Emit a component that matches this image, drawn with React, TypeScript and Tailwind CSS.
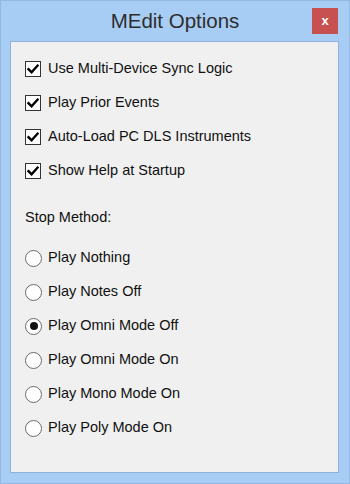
import React from "react";

const font = { fontFamily: '"Liberation Sans", Arial, sans-serif' };

function Check() {
  return (
    <div className="w-[16px] h-[16px] border border-[#333333] bg-white flex items-center justify-center shrink-0">
      <svg width="12" height="12" viewBox="0 0 12 12">
        <path d="M1.5 6.2 L4.6 9.3 L10.6 2.6" fill="none" stroke="#000" strokeWidth="2.4" strokeLinecap="square" />
      </svg>
    </div>
  );
}

function Radio({ on }: { on?: boolean }) {
  return (
    <div className="w-[17px] h-[17px] rounded-full border-[1.5px] border-[#6b6b6b] bg-white flex items-center justify-center shrink-0">
      {on && <div className="w-[8px] h-[8px] rounded-full bg-[#111]" />}
    </div>
  );
}

export default function App() {
  const checks = [
    "Use Multi-Device Sync Logic",
    "Play Prior Events",
    "Auto-Load PC DLS Instruments",
    "Show Help at Startup",
  ];
  const radios = [
    "Play Nothing",
    "Play Notes Off",
    "Play Omni Mode Off",
    "Play Omni Mode On",
    "Play Mono Mode On",
    "Play Poly Mode On",
  ];
  return (
    <div className="w-[350px] h-[484px] bg-[#a8cdf4] border border-[#93b9e3] flex flex-col" style={font}>
      <div className="h-[40px] relative flex items-center justify-center shrink-0">
        <span className="text-[20.5px] text-[#2e2e2e] leading-none pt-[1px]">MEdit Options</span>
        <div className="absolute left-[311px] top-[7px] w-[26px] h-[26px] bg-[#c75050] flex items-center justify-center">
          <span className="text-white text-[13px] font-bold leading-none pb-[1px]">x</span>
        </div>
      </div>
      <div className="ml-[9px] mr-[10px] mb-[10px] flex-1 bg-[#f0f0f0] border border-[#8eb2dc] pt-[10px] pl-[14px] flex flex-col text-[14.5px] text-[#111]">
        {checks.map((c) => (
          <div key={c} className="h-[34px] flex items-center gap-[7px]">
            <Check />
            <span>{c}</span>
          </div>
        ))}
        <div className="h-[34px] mt-[13px] flex items-center">
          <span>Stop Method:</span>
        </div>
        <div className="mt-[6px] flex flex-col">
          {radios.map((r, i) => (
            <div key={r} className="h-[34px] flex items-center gap-[6px]">
              <Radio on={i === 2} />
              <span>{r}</span>
            </div>
          ))}
        </div>
      </div>
    </div>
  );
}
